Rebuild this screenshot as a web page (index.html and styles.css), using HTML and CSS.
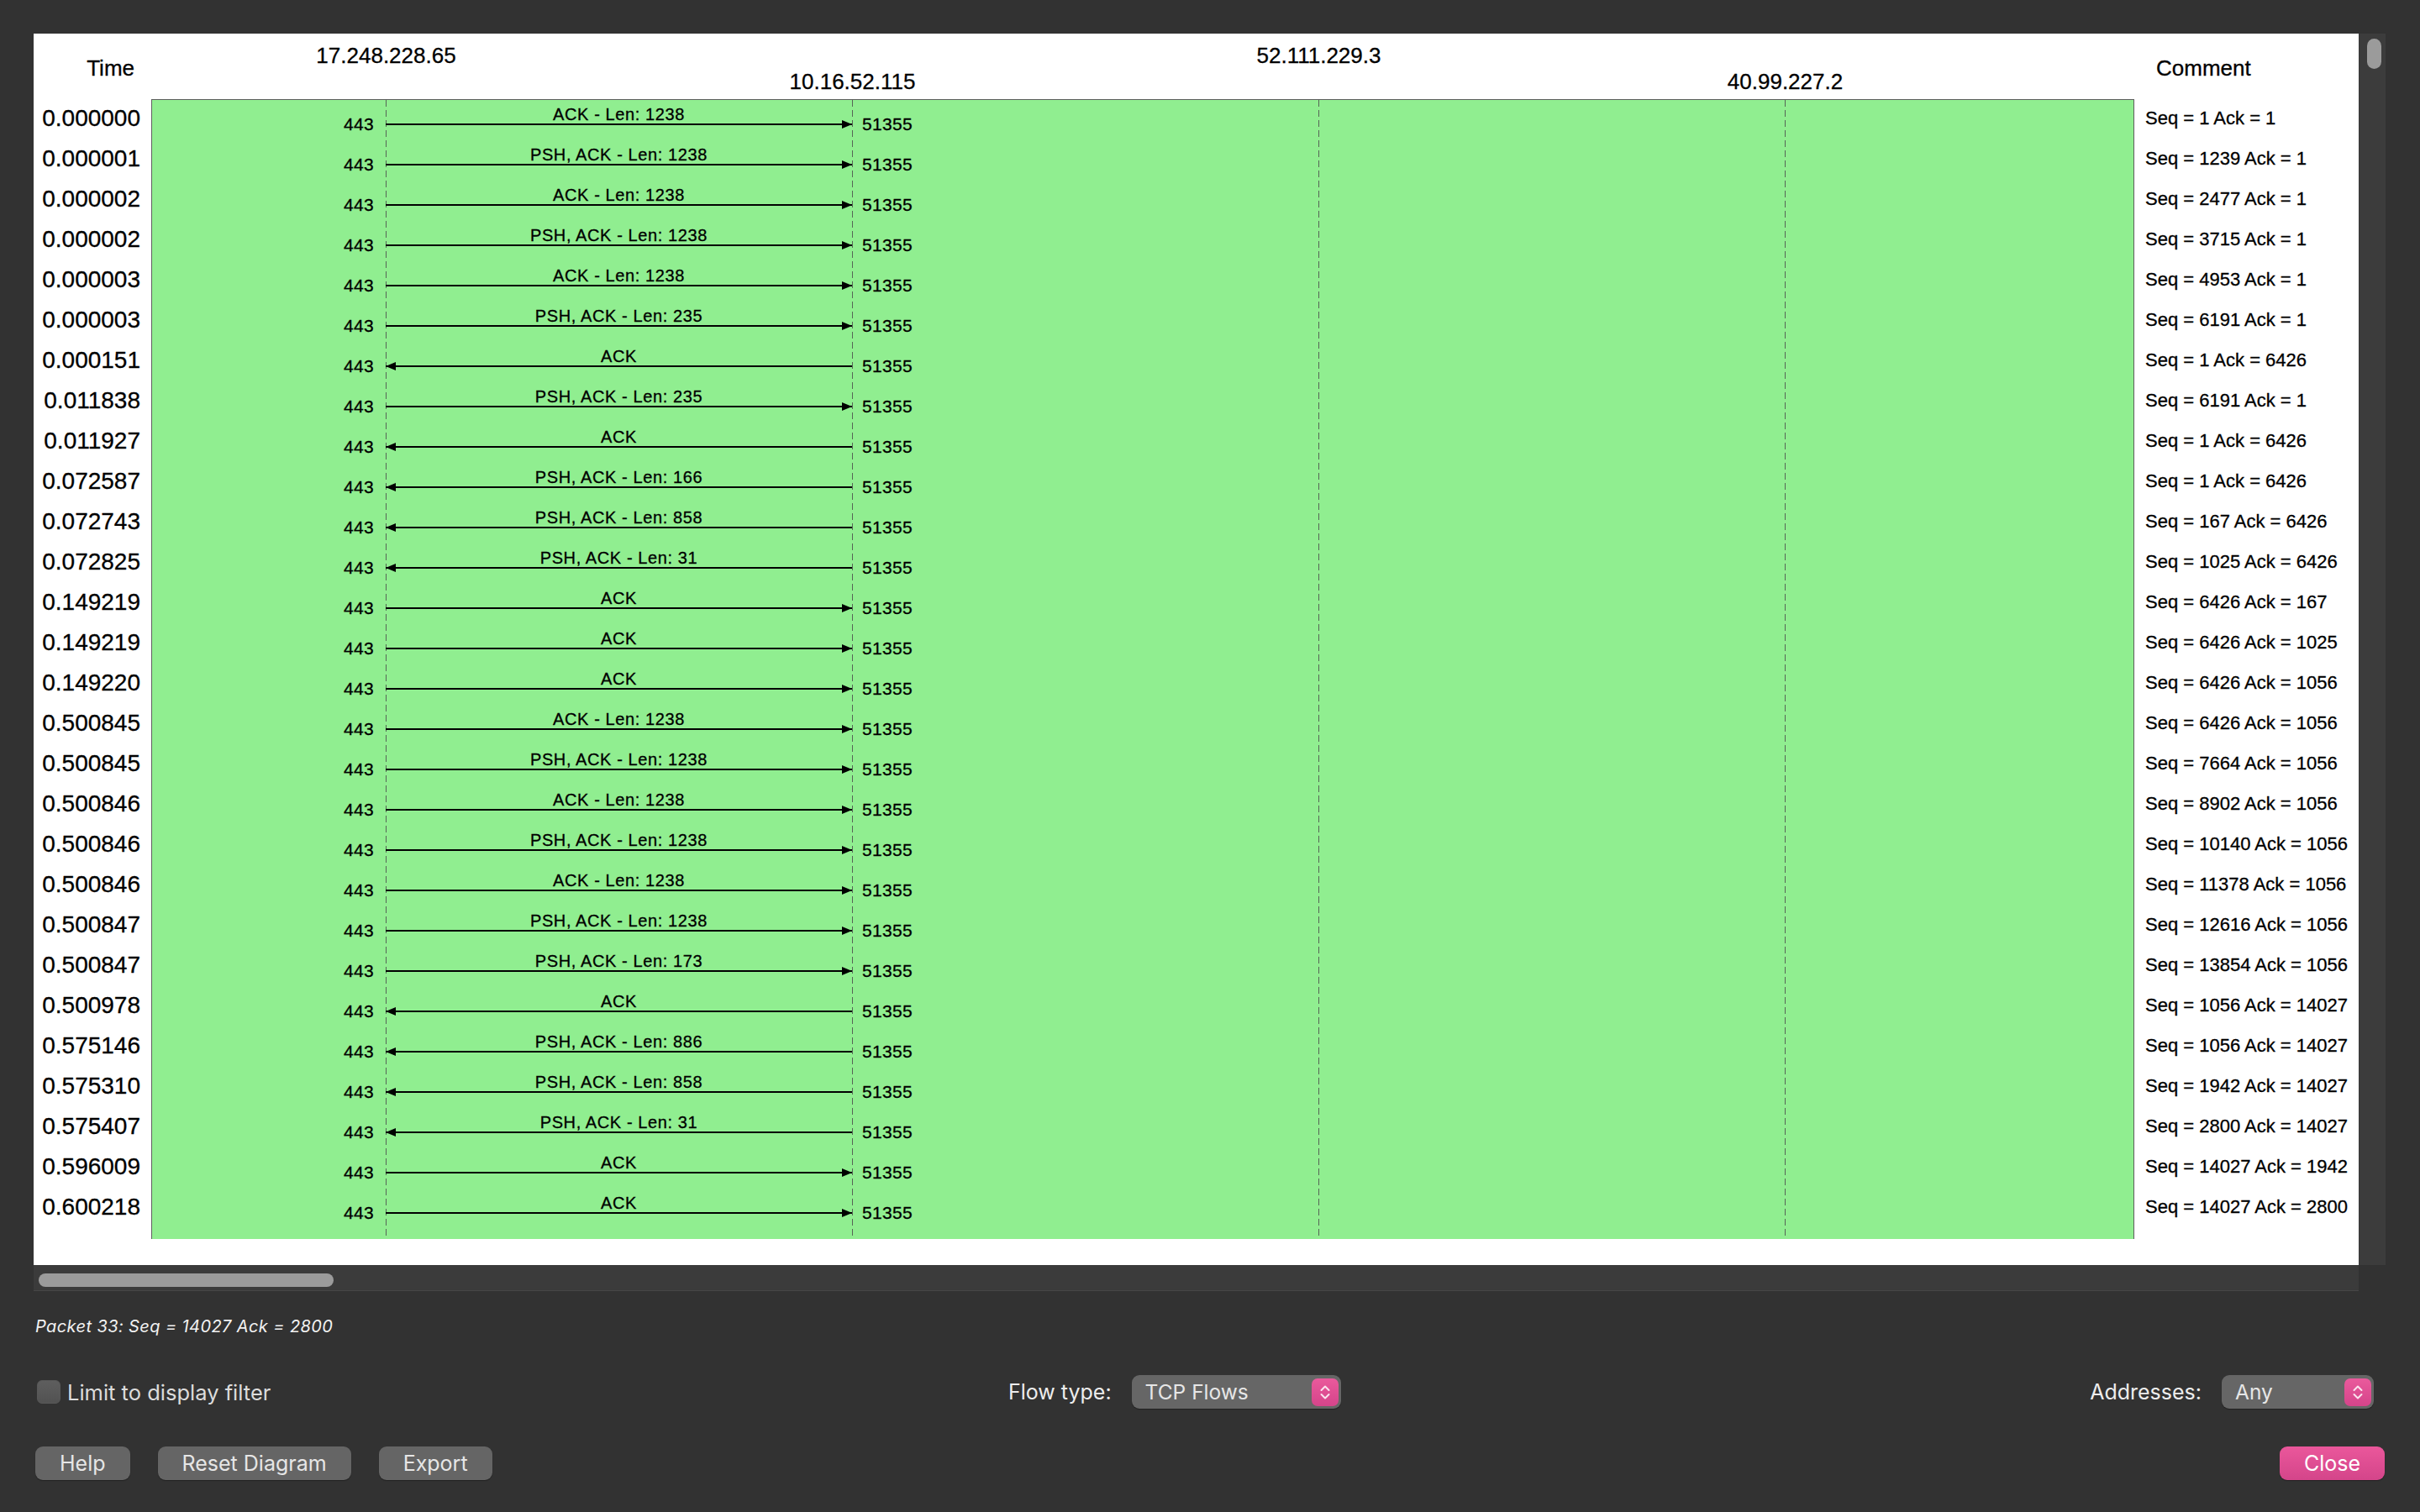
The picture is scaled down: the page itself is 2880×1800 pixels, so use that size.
FILE: index.html
```html
<!DOCTYPE html>
<html>
<head>
<meta charset="utf-8">
<title>Flow Graph</title>
<link rel="stylesheet" href="styles.css">
</head>
<body>
<div class="dialog">
  <div class="scrollarea">
    <div class="canvas">
      <div class="h-time">Time</div>
      <div class="h-nodes">
        <div class="node top">17.248.228.65</div>
        <div class="node bottom">10.16.52.115</div>
        <div class="node top">52.111.229.3</div>
        <div class="node bottom">40.99.227.2</div>
      </div>
      <div class="h-comment">Comment</div>

      <div class="times">
        <div class="t">0.000000</div>
        <div class="t">0.000001</div>
        <div class="t">0.000002</div>
        <div class="t">0.000002</div>
        <div class="t">0.000003</div>
        <div class="t">0.000003</div>
        <div class="t">0.000151</div>
        <div class="t">0.011838</div>
        <div class="t">0.011927</div>
        <div class="t">0.072587</div>
        <div class="t">0.072743</div>
        <div class="t">0.072825</div>
        <div class="t">0.149219</div>
        <div class="t">0.149219</div>
        <div class="t">0.149220</div>
        <div class="t">0.500845</div>
        <div class="t">0.500845</div>
        <div class="t">0.500846</div>
        <div class="t">0.500846</div>
        <div class="t">0.500846</div>
        <div class="t">0.500847</div>
        <div class="t">0.500847</div>
        <div class="t">0.500978</div>
        <div class="t">0.575146</div>
        <div class="t">0.575310</div>
        <div class="t">0.575407</div>
        <div class="t">0.596009</div>
        <div class="t">0.600218</div>
      </div>

      <div class="diagram">
        <div class="msg"><span class="port-l">443</span><div class="arrow right"><span class="label">ACK - Len: 1238</span><span class="line"></span></div><span class="port-r">51355</span></div>
        <div class="msg"><span class="port-l">443</span><div class="arrow right"><span class="label">PSH, ACK - Len: 1238</span><span class="line"></span></div><span class="port-r">51355</span></div>
        <div class="msg"><span class="port-l">443</span><div class="arrow right"><span class="label">ACK - Len: 1238</span><span class="line"></span></div><span class="port-r">51355</span></div>
        <div class="msg"><span class="port-l">443</span><div class="arrow right"><span class="label">PSH, ACK - Len: 1238</span><span class="line"></span></div><span class="port-r">51355</span></div>
        <div class="msg"><span class="port-l">443</span><div class="arrow right"><span class="label">ACK - Len: 1238</span><span class="line"></span></div><span class="port-r">51355</span></div>
        <div class="msg"><span class="port-l">443</span><div class="arrow right"><span class="label">PSH, ACK - Len: 235</span><span class="line"></span></div><span class="port-r">51355</span></div>
        <div class="msg"><span class="port-l">443</span><div class="arrow left"><span class="label">ACK</span><span class="line"></span></div><span class="port-r">51355</span></div>
        <div class="msg"><span class="port-l">443</span><div class="arrow right"><span class="label">PSH, ACK - Len: 235</span><span class="line"></span></div><span class="port-r">51355</span></div>
        <div class="msg"><span class="port-l">443</span><div class="arrow left"><span class="label">ACK</span><span class="line"></span></div><span class="port-r">51355</span></div>
        <div class="msg"><span class="port-l">443</span><div class="arrow left"><span class="label">PSH, ACK - Len: 166</span><span class="line"></span></div><span class="port-r">51355</span></div>
        <div class="msg"><span class="port-l">443</span><div class="arrow left"><span class="label">PSH, ACK - Len: 858</span><span class="line"></span></div><span class="port-r">51355</span></div>
        <div class="msg"><span class="port-l">443</span><div class="arrow left"><span class="label">PSH, ACK - Len: 31</span><span class="line"></span></div><span class="port-r">51355</span></div>
        <div class="msg"><span class="port-l">443</span><div class="arrow right"><span class="label">ACK</span><span class="line"></span></div><span class="port-r">51355</span></div>
        <div class="msg"><span class="port-l">443</span><div class="arrow right"><span class="label">ACK</span><span class="line"></span></div><span class="port-r">51355</span></div>
        <div class="msg"><span class="port-l">443</span><div class="arrow right"><span class="label">ACK</span><span class="line"></span></div><span class="port-r">51355</span></div>
        <div class="msg"><span class="port-l">443</span><div class="arrow right"><span class="label">ACK - Len: 1238</span><span class="line"></span></div><span class="port-r">51355</span></div>
        <div class="msg"><span class="port-l">443</span><div class="arrow right"><span class="label">PSH, ACK - Len: 1238</span><span class="line"></span></div><span class="port-r">51355</span></div>
        <div class="msg"><span class="port-l">443</span><div class="arrow right"><span class="label">ACK - Len: 1238</span><span class="line"></span></div><span class="port-r">51355</span></div>
        <div class="msg"><span class="port-l">443</span><div class="arrow right"><span class="label">PSH, ACK - Len: 1238</span><span class="line"></span></div><span class="port-r">51355</span></div>
        <div class="msg"><span class="port-l">443</span><div class="arrow right"><span class="label">ACK - Len: 1238</span><span class="line"></span></div><span class="port-r">51355</span></div>
        <div class="msg"><span class="port-l">443</span><div class="arrow right"><span class="label">PSH, ACK - Len: 1238</span><span class="line"></span></div><span class="port-r">51355</span></div>
        <div class="msg"><span class="port-l">443</span><div class="arrow right"><span class="label">PSH, ACK - Len: 173</span><span class="line"></span></div><span class="port-r">51355</span></div>
        <div class="msg"><span class="port-l">443</span><div class="arrow left"><span class="label">ACK</span><span class="line"></span></div><span class="port-r">51355</span></div>
        <div class="msg"><span class="port-l">443</span><div class="arrow left"><span class="label">PSH, ACK - Len: 886</span><span class="line"></span></div><span class="port-r">51355</span></div>
        <div class="msg"><span class="port-l">443</span><div class="arrow left"><span class="label">PSH, ACK - Len: 858</span><span class="line"></span></div><span class="port-r">51355</span></div>
        <div class="msg"><span class="port-l">443</span><div class="arrow left"><span class="label">PSH, ACK - Len: 31</span><span class="line"></span></div><span class="port-r">51355</span></div>
        <div class="msg"><span class="port-l">443</span><div class="arrow right"><span class="label">ACK</span><span class="line"></span></div><span class="port-r">51355</span></div>
        <div class="msg"><span class="port-l">443</span><div class="arrow right"><span class="label">ACK</span><span class="line"></span></div><span class="port-r">51355</span></div>
      </div>

      <div class="comments">
        <div class="c">Seq = 1 Ack = 1</div>
        <div class="c">Seq = 1239 Ack = 1</div>
        <div class="c">Seq = 2477 Ack = 1</div>
        <div class="c">Seq = 3715 Ack = 1</div>
        <div class="c">Seq = 4953 Ack = 1</div>
        <div class="c">Seq = 6191 Ack = 1</div>
        <div class="c">Seq = 1 Ack = 6426</div>
        <div class="c">Seq = 6191 Ack = 1</div>
        <div class="c">Seq = 1 Ack = 6426</div>
        <div class="c">Seq = 1 Ack = 6426</div>
        <div class="c">Seq = 167 Ack = 6426</div>
        <div class="c">Seq = 1025 Ack = 6426</div>
        <div class="c">Seq = 6426 Ack = 167</div>
        <div class="c">Seq = 6426 Ack = 1025</div>
        <div class="c">Seq = 6426 Ack = 1056</div>
        <div class="c">Seq = 6426 Ack = 1056</div>
        <div class="c">Seq = 7664 Ack = 1056</div>
        <div class="c">Seq = 8902 Ack = 1056</div>
        <div class="c">Seq = 10140 Ack = 1056</div>
        <div class="c">Seq = 11378 Ack = 1056</div>
        <div class="c">Seq = 12616 Ack = 1056</div>
        <div class="c">Seq = 13854 Ack = 1056</div>
        <div class="c">Seq = 1056 Ack = 14027</div>
        <div class="c">Seq = 1056 Ack = 14027</div>
        <div class="c">Seq = 1942 Ack = 14027</div>
        <div class="c">Seq = 2800 Ack = 14027</div>
        <div class="c">Seq = 14027 Ack = 1942</div>
        <div class="c">Seq = 14027 Ack = 2800</div>
      </div>
    </div>
    <div class="vscroll"><div class="thumb"></div></div>
    <div class="hscroll"><div class="thumb"></div></div>
    <div class="corner"></div>
  </div>

  <div class="status">Packet 33: Seq = 14027 Ack = 2800</div>

  <div class="controls">
    <label class="check"><span class="box"></span><span class="check-label">Limit to display filter</span></label>
    <div class="field field-flow">
      <span class="field-label">Flow type:</span>
      <div class="combo combo-flow">
        <span class="combo-text">TCP Flows</span>
        <span class="stepper"><svg width="32" height="33" viewBox="0 0 32 33"><path d="M11.5 14 L16 9.5 L20.5 14" /><path d="M11.5 19 L16 23.5 L20.5 19" /></svg></span>
      </div>
    </div>
    <div class="field">
      <span class="field-label">Addresses:</span>
      <div class="combo combo-addr">
        <span class="combo-text">Any</span>
        <span class="stepper"><svg width="32" height="33" viewBox="0 0 32 33"><path d="M11.5 14 L16 9.5 L20.5 14" /><path d="M11.5 19 L16 23.5 L20.5 19" /></svg></span>
      </div>
    </div>
  </div>

  <div class="buttons">
    <button class="btn">Help</button>
    <button class="btn">Reset Diagram</button>
    <button class="btn">Export</button>
    <button class="btn btn-primary">Close</button>
  </div>
</div>
</body>
</html>
```

FILE: styles.css
```css
html, body {
  margin: 0;
  padding: 0;
}

body {
  background: #323232;
  width: 2880px;
  height: 1800px;
  overflow: hidden;
  font-family: "Inter", "Liberation Sans", sans-serif;
}

.dialog {
  padding: 40px 41px 0 40px;
}

/* ---------- scroll area ---------- */
.scrollarea {
  display: grid;
  grid-template-columns: 2767px 32px;
  grid-template-rows: 1466px 31px;
}

.canvas {
  background: #ffffff;
  display: grid;
  grid-template-columns: 140px 2360px 1fr;
  grid-template-rows: 78px auto;
  align-content: start;
  overflow: hidden;
  font-family: "Liberation Sans", Arial, sans-serif;
  color: #000;
  -webkit-text-stroke: 0.3px #000;
}

.h-time {
  font-size: 26px;
  line-height: 26px;
  padding-top: 28px;
  padding-right: 20px;
  text-align: right;
}

.h-nodes {
  display: grid;
  grid-template-columns: repeat(4, 555px);
  padding-left: 2px;
  font-size: 26px;
  line-height: 26px;
}

.node {
  text-align: center;
  white-space: nowrap;
}

.node.top { padding-top: 13px; }
.node.bottom { padding-top: 44px; }

.h-comment {
  font-size: 26px;
  line-height: 26px;
  padding-top: 28px;
  padding-left: 26px;
}

/* time column */
.times {
  padding-top: 1px;
}

.t {
  height: 48px;
  font-size: 28px;
  line-height: 44px;
  text-align: right;
  padding-right: 13px;
}

/* diagram column */
.diagram {
  border: 1px solid #5e5e5e;
  border-bottom: 0;
  padding-bottom: 12px;
  background-color: #90ee90;
  background-image:
    linear-gradient(to bottom, #566556 0 8px, transparent 8px 12px),
    linear-gradient(to bottom, #566556 0 8px, transparent 8px 12px),
    linear-gradient(to bottom, #566556 0 8px, transparent 8px 12px),
    linear-gradient(to bottom, #566556 0 8px, transparent 8px 12px);
  background-size: 1px 12px;
  background-repeat: repeat-y;
  background-position: 278px 0, 833px 0, 1388px 0, 1943px 0;
}

.msg {
  display: flex;
  height: 48px;
}

.port-l,
.port-r {
  font-size: 21px;
  line-height: 24px;
  padding-top: 17px;
  letter-spacing: 0.3px;
  white-space: nowrap;
}

.port-l {
  width: 278px;
  box-sizing: border-box;
  text-align: right;
  padding-right: 14px;
}

.port-r {
  padding-left: 12px;
}

.arrow {
  width: 555px;
  display: flex;
  flex-direction: column;
  align-items: center;
}

.label {
  font-size: 20px;
  line-height: 20px;
  padding-top: 7px;
  letter-spacing: 0.6px;
  white-space: nowrap;
}

.line {
  align-self: stretch;
  height: 2px;
  margin-top: 1px;
  background: #000;
  position: relative;
}

.arrow.right .line::after {
  content: "";
  position: absolute;
  right: 0;
  top: -4px;
  border-left: 12px solid #000;
  border-top: 5px solid transparent;
  border-bottom: 5px solid transparent;
}

.arrow.left .line::before {
  content: "";
  position: absolute;
  left: 0;
  top: -4px;
  border-right: 12px solid #000;
  border-top: 5px solid transparent;
  border-bottom: 5px solid transparent;
}

/* comment column */
.comments {
  padding-top: 1px;
}

.c {
  height: 48px;
  box-sizing: border-box;
  padding-top: 10px;
  padding-left: 13px;
  font-size: 22px;
  line-height: 24px;
  white-space: nowrap;
}

/* scrollbars */
.vscroll {
  background: #3c3c3c;
  padding: 6px 0 0 10px;
}

.vscroll .thumb {
  width: 17px;
  height: 36px;
  border-radius: 9px;
  background: #9b9b9b;
}

.hscroll {
  background: #3b3b3b;
  box-sizing: border-box;
  padding: 10px 0 0 6px;
  border-bottom: 1px solid #464646;
}

.hscroll .thumb {
  width: 351px;
  height: 16px;
  border-radius: 8px;
  background: #9b9b9b;
}

.corner {
  background: #323232;
}

/* status line */
.status {
  margin-top: 32px;
  padding-left: 2px;
  font-size: 20px;
  line-height: 20px;
  letter-spacing: 0.4px;
  font-style: italic;
  color: #f2f2f2;
}

/* controls row */
.controls {
  display: flex;
  align-items: center;
  height: 40px;
  margin-top: 48px;
  padding-left: 4px;
  padding-right: 14px;
}

.check {
  display: flex;
  align-items: center;
  gap: 8px;
}

.box {
  width: 28px;
  height: 28px;
  box-sizing: border-box;
  border-radius: 6px;
  background: linear-gradient(#5e5e5e, #525252);
  border: 1px solid #585858;
}

.check-label {
  font-size: 25.5px;
  color: #dcdcdc;
}

.field {
  display: flex;
  align-items: center;
  gap: 24px;
  margin-left: auto;
}

.field-flow {
  margin-right: 14px;
}

.field-label {
  font-size: 25px;
  color: #ededed;
}

.combo {
  height: 40px;
  box-sizing: border-box;
  display: flex;
  align-items: center;
  padding-left: 16px;
  padding-right: 3px;
  border-radius: 9px;
  background: #666666;
  box-shadow: 0 1px 1px rgba(0, 0, 0, 0.35);
}

.combo-flow { width: 249px; }
.combo-addr { width: 181px; }

.combo-text {
  font-size: 24.5px;
  color: #e6e6e6;
}

.stepper {
  margin-left: auto;
  width: 32px;
  height: 33px;
  border-radius: 7px;
  background: linear-gradient(#ea5a9c, #d5448a);
  display: flex;
}

.stepper path {
  fill: none;
  stroke: #fbe4ef;
  stroke-width: 2;
  stroke-linecap: round;
  stroke-linejoin: round;
}

/* buttons row */
.buttons {
  display: flex;
  gap: 33px;
  margin-top: 45px;
  padding-left: 2px;
  padding-right: 1px;
}

.btn {
  height: 40px;
  padding: 0 29px;
  border: 0;
  border-radius: 9px;
  background: #656565;
  color: #e6e6e6;
  font-family: "Inter", "Liberation Sans", sans-serif;
  font-size: 25px;
  box-shadow: 0 1px 1px rgba(0, 0, 0, 0.35);
}

.btn-primary {
  margin-left: auto;
  background: linear-gradient(#ea579b, #d4458a);
  color: #ffffff;
}
```
